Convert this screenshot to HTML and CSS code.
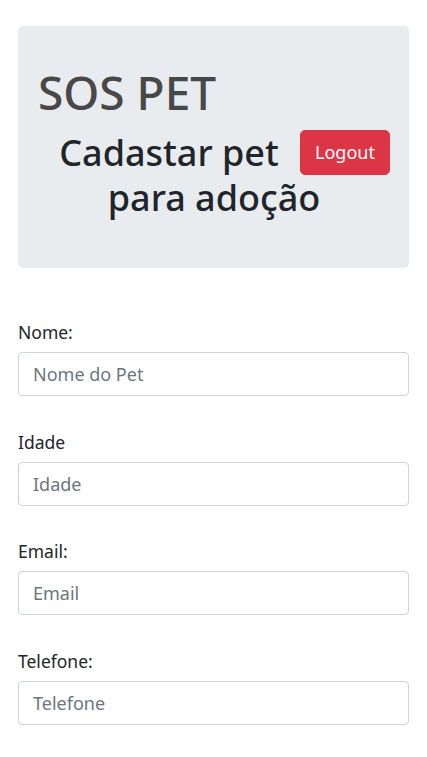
FILE: index.html
```html
<!DOCTYPE html>
<html lang="pt-BR">
<head>
<meta charset="utf-8">
<title>SOS PET</title>
<link rel="stylesheet" href="styles.css">
</head>
<body>
<div class="container">
  <header class="jumbotron">
    <h1 class="brand">SOS PET</h1>
    <div class="title-row">
      <h2 class="page-title"><span class="line line-1">Cadastar pet</span> <span class="line line-2">para adoção</span></h2>
      <button class="btn-logout" type="button">Logout</button>
    </div>
  </header>
  <form class="pet-form">
    <div class="form-group">
      <label for="nome">Nome:</label>
      <input id="nome" class="form-control" type="text" placeholder="Nome do Pet">
    </div>
    <div class="form-group">
      <label for="idade">Idade</label>
      <input id="idade" class="form-control" type="text" placeholder="Idade">
    </div>
    <div class="form-group">
      <label for="email">Email:</label>
      <input id="email" class="form-control" type="email" placeholder="Email">
    </div>
    <div class="form-group">
      <label for="telefone">Telefone:</label>
      <input id="telefone" class="form-control" type="text" placeholder="Telefone">
    </div>
  </form>
</div>
</body>
</html>
```
FILE: styles.css
```css
* { box-sizing: border-box; }
html, body { margin: 0; padding: 0; }
body {
  font-family: "Noto Sans", "Open Sans", sans-serif;
  color: #212529;
  background: #fff;
}
.container {
  padding: 26px 18px 0 18px;
}
.jumbotron {
  background: #e9ecef;
  border-radius: 5px;
  padding: 37px 19px 0 20px;
  height: 242px;
}
.brand {
  margin: 0;
  font-size: 46px;
  font-weight: 500;
  line-height: 58px;
  color: #484848;
}
.title-row {
  margin-top: 9px;
  display: grid;
  grid-template-columns: 1fr 90px;
  grid-template-rows: 45px 45px;
}
.page-title {
  display: contents;
  font-size: 36px;
  font-weight: 500;
}
.line {
  display: block;
  text-align: center;
  font-size: 36px;
  font-weight: 500;
  line-height: 45px;
  white-space: nowrap;
}
.line-1 {
  grid-column: 1;
  grid-row: 1;
}
.line-2 {
  grid-column: 1 / 3;
  grid-row: 2;
}
.btn-logout {
  grid-column: 2;
  grid-row: 1;
  background: #dc3545;
  color: #fff;
  border: 1px solid #dc3545;
  border-radius: 5px;
  font-family: inherit;
  font-size: 18px;
  line-height: 27px;
  padding: 8px 0;
  width: 90px;
  height: 45px;
}
.pet-form {
  margin-top: 52px;
}
.form-group {
  display: flex;
  flex-direction: column;
  margin-bottom: 33.5px;
}
.form-group label {
  font-size: 17.5px;
  line-height: 24px;
  margin-bottom: 8px;
}
.form-control {
  height: 44px;
  border: 1px solid #ced4da;
  border-radius: 4px;
  padding: 0 14px;
  font-family: inherit;
  font-size: 18px;
  color: #495057;
  background: #fff;
}
.form-control::placeholder {
  color: #6c757d;
}
```
